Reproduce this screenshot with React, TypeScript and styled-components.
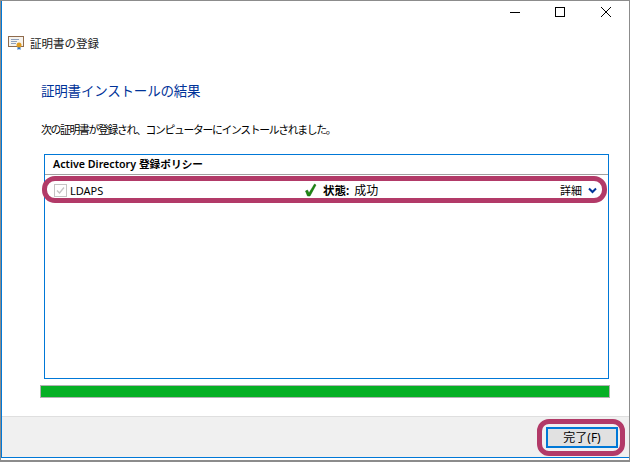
import { createGlobalStyle } from 'styled-components'
import styled from 'styled-components'

const GlobalStyle = createGlobalStyle`
    html, body {
        margin: 0;
        padding: 0;
        background: #ffffff;
    }
`

const Shot = styled.div`
    width: 630px;
    height: 462px;
    box-sizing: border-box;
    border-top: 1px solid #8c8c8c;
    border-right: 1px solid #8c8c8c;
    border-bottom: 2px solid #8c8c8c;
    border-left: 1px solid #8c8c8c;
    padding-bottom: 2px;
    font-family: "Noto Sans", "Noto Sans CJK JP", sans-serif;
    font-size: 12px;
    color: #000;
    overflow: hidden;
`

const Window = styled.div`
    height: 100%;
    box-sizing: border-box;
    display: flex;
    flex-direction: column;
    border-left: 1px solid #0078d7;
    border-bottom: 1px solid #0078d7;
    background: #fff;
`

const CaptionButtons = styled.div`
    display: flex;
    justify-content: flex-end;
    height: 22px;
`

const CaptionButton = styled.div`
    width: 46px;
    height: 22px;
    display: flex;
    align-items: center;
    justify-content: center;

    &:first-child {
        width: 44px;
    }
`

const Header = styled.div`
    display: flex;
    align-items: center;
    gap: 5px;
    height: 18px;
    margin-top: 11px;
    padding-left: 6px;
`

const HeaderTitle = styled.span`
    font-size: 11.5px;
    margin-left: 1px;
    color: #1a1a1a;
`

const Body = styled.div`
    flex: 1;
    display: flex;
    flex-direction: column;
    padding: 0 20px 0 39px;
`

const Heading = styled.div`
    margin-top: 28px;
    height: 22px;
    line-height: 22px;
    font-size: 13.5px;
    letter-spacing: -0.2px;
    color: #003399;
`

const Message = styled.div`
    margin-top: 19px;
    height: 18px;
    line-height: 18px;
    font-size: 10.8px;
    letter-spacing: -1.3px;
`

const PolicyList = styled.div`
    margin: 15px 0 0 3px;
    width: 565px;
    height: 225px;
    box-sizing: border-box;
    border: 1px solid #0078d7;
`

const PolicyHeading = styled.div`
    height: 19px;
    line-height: 19px;
    padding-left: 8px;
    font-size: 10.7px;
    font-weight: 600;
    border-bottom: 1px solid #a0a0a0;
`

const PolicyRow = styled.div`
    display: grid;
    grid-template-columns: 250px auto 1fr;
    align-items: center;
    height: 30px;
    padding: 0 11px 0 9px;
`

const Cell = styled.div<{ $align?: string, $gap?: number }>`
    display: flex;
    align-items: center;
    justify-content: ${p => p.$align || 'flex-start'};
    gap: ${p => p.$gap ?? 3}px;
`

const Check = styled.div`
    width: 11px;
    height: 11px;
    border: 1px solid #c4c4c4;
    display: flex;
`

const Strong = styled.span`
    font-weight: 700;
    font-size: 11.5px;
`

const Plain = styled.span<{ $size?: number }>`
    font-size: ${p => p.$size ?? 11}px;
`

const Progress = styled.div`
    margin: 6px 0 0 -1px;
    width: 570px;
    height: 13px;
    box-sizing: border-box;
    border: 1px solid #b2b2b2;
    background: #06b025;
`

const Footer = styled.div`
    height: 40px;
    flex-shrink: 0;
    display: flex;
    align-items: center;
    justify-content: flex-end;
    padding-right: 11px;
    background: #f0f0f0;
    border-top: 1px solid #dfdfdf;
`

const FinishButton = styled.div`
    width: 68px;
    height: 17px;
    border: 2px solid #0078d7;
    background: #e1e1e1;
    display: flex;
    align-items: center;
    justify-content: center;
    font-size: 12px;
`

const Callout = styled.div<{ $x: number, $y: number, $w: number, $h: number, $r: number }>`
    position: absolute;
    left: ${p => p.$x}px;
    top: ${p => p.$y}px;
    width: ${p => p.$w}px;
    height: ${p => p.$h}px;
    box-sizing: border-box;
    border: 5px solid #b23a68;
    border-radius: ${p => p.$r}px;
`

const CertIcon = () => (
    <svg width="16" height="16" viewBox="0 0 16 16">
        <rect x="0.5" y="1.5" width="15" height="10" fill="#f6f3ee" stroke="#8f6b4c" />
        <path d="M3 4.5h8M3 6.5h6M3 8.5h5" stroke="#8ea0bc" strokeWidth="1" />
        <path d="M9.5 11v4l1.500-1 1.500 1v-4z" fill="#2f72c4" />
        <circle cx="11" cy="10" r="2.500" fill="#e09a1c" />
    </svg>
)

export default function App() {
    return (
        <>
            <GlobalStyle />
            <Shot>
                <Window>
                    <CaptionButtons>
                        <CaptionButton>
                            <svg width="10" height="10" viewBox="0 0 10 10"><path d="M0 5.500h10" stroke="#000" /></svg>
                        </CaptionButton>
                        <CaptionButton>
                            <svg width="10" height="10" viewBox="0 0 10 10"><rect x="0.500" y="0.500" width="9" height="9" fill="none" stroke="#000" /></svg>
                        </CaptionButton>
                        <CaptionButton>
                            <svg width="10" height="10" viewBox="0 0 10 10"><path d="M0 0l10 10M10 0L0 10" stroke="#000" /></svg>
                        </CaptionButton>
                    </CaptionButtons>
                    <Header>
                        <CertIcon />
                        <HeaderTitle>証明書の登録</HeaderTitle>
                    </Header>
                    <Body>
                        <Heading>証明書インストールの結果</Heading>
                        <Message>次の証明書が登録され、コンピューターにインストールされました。</Message>
                        <PolicyList>
                            <PolicyHeading>Active Directory 登録ポリシー</PolicyHeading>
                            <PolicyRow>
                                <Cell>
                                    <Check>
                                        <svg width="11" height="11" viewBox="0 0 11 11"><path d="M2 5.500l2.500 2.500L9 2.500" fill="none" stroke="#c4c4c4" strokeWidth="1.300" /></svg>
                                    </Check>
                                    <Plain>LDAPS</Plain>
                                </Cell>
                                <Cell $gap={5}>
                                    <svg width="14" height="14" viewBox="0 0 14 14"><path d="M1.500 8l2-1 1.500 3L10.500 1l1.500 1-6 11H3.500z" fill="#1f8a12" stroke="#0d5a08" strokeWidth="0.500" /></svg>
                                    <Strong>状態:</Strong>
                                    <Plain $size={12}>成功</Plain>
                                </Cell>
                                <Cell $align="flex-end" $gap={6}>
                                    <Plain>詳細</Plain>
                                    <svg width="9" height="9" viewBox="0 0 9 9"><path d="M1 2.500L4.500 6 8 2.500" fill="none" stroke="#003399" strokeWidth="2" /></svg>
                                </Cell>
                            </PolicyRow>
                        </PolicyList>
                        <Progress />
                    </Body>
                    <Footer>
                        <FinishButton>完了(F)</FinishButton>
                    </Footer>
                </Window>
            </Shot>
            <Callout $x={42} $y={176} $w={565} $h={27} $r={13} />
            <Callout $x={537} $y={419} $w={88} $h={37} $r={12} />
        </>
    )
}
